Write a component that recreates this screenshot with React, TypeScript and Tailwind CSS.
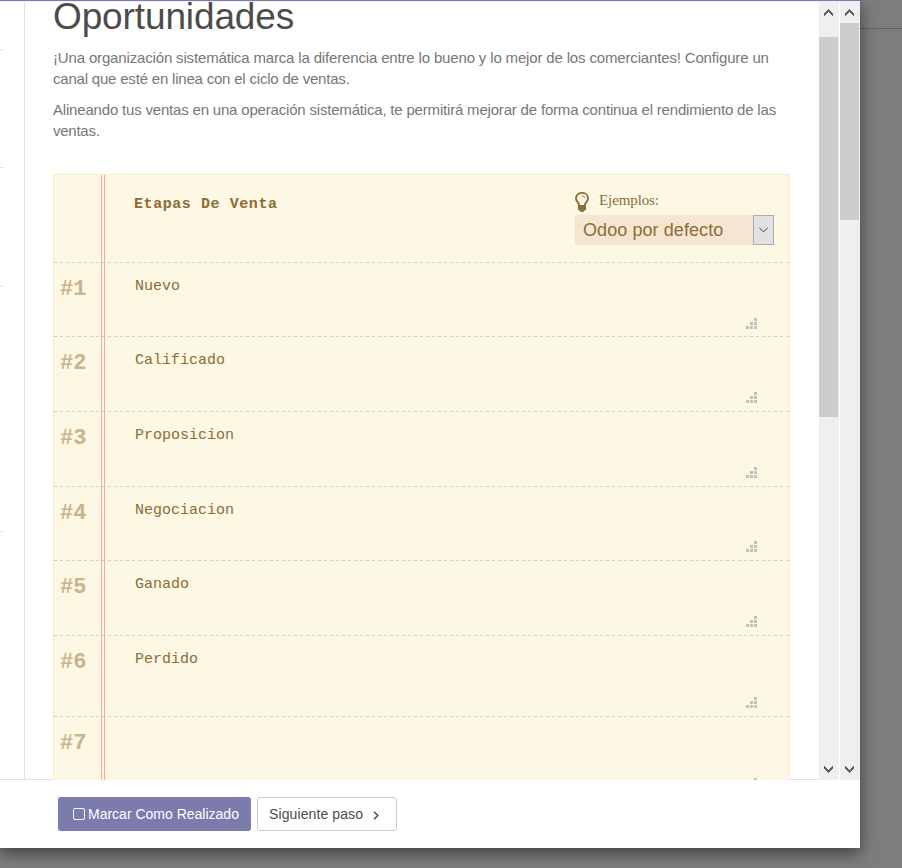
import React from "react";

const SANS = "font-['Liberation_Sans',Arial,sans-serif]";
const MONO = "font-['Liberation_Mono','Courier_New',monospace]";
const SERIF = "font-['Liberation_Serif','Times_New_Roman',serif]";

const DASH =
  "bg-[repeating-linear-gradient(90deg,#b6d5df_0px,#b6d5df_3px,transparent_3px,transparent_6px)]";

const stages = [
  { name: "Nuevo", height: "h-[74px]", grip: "pt-[55px]" },
  { name: "Calificado", height: "h-[75px]", grip: "pt-[55px]" },
  { name: "Proposicion", height: "h-[75px]", grip: "pt-[55px]" },
  { name: "Negociacion", height: "h-[74px]", grip: "pt-[54px]" },
  { name: "Ganado", height: "h-[75px]", grip: "pt-[55px]" },
  { name: "Perdido", height: "h-[81px]", grip: "pt-[61px]" },
  { name: "", height: "h-[81px]", grip: "pt-[61px]" },
];

function Grip() {
  return (
    <svg width="11" height="11" viewBox="0 0 11 11" fill="#c0c0c0" shapeRendering="crispEdges">
      <path d="M8 0h3v3h-3zM4 4h3v3h-3zM8 4h3v3h-3zM0 8h3v3h-3zM4 8h3v3h-3zM8 8h3v3h-3z" />
    </svg>
  );
}

function Bulb() {
  return (
    <svg width="14" height="20" viewBox="0 0 14 20" fill="none">
      <path
        d="M4.300 13.500C4.200 10.800 1 9.800 1 6.300C1 3 3.700 .9 7 .9s6 2.100 6 5.400c0 3.500-3.200 4.500-3.300 7.200"
        stroke="#8d6c38"
        strokeWidth="1.900"
      />
      <path d="M6.800 3.700c1.700 0 2.900.8 3.100 2.300" stroke="#8d6c38" strokeWidth=".9" />
      <path d="M3 13h8v4.700l-1.900 1-.8 1.300H5.700l-.8-1.300-1.900-1z" fill="#8d6c38" />
    </svg>
  );
}

function Arrow({ up }: { up?: boolean }) {
  return (
    <svg width="9" height="7" viewBox="0 0 9 7" fill="#606060" shapeRendering="crispEdges">
      <path
        transform={up ? undefined : "matrix(1 0 0 -1 0 7)"}
        d="M4 0h1v1h1v1h1v1h1v1h1v3h-1v-1h-1v-1h-1v-1h-1v-1h-1v1h-1v1h-1v1h-1v1h-1v-3h1v-1h1v-1h1v-1h1z"
      />
    </svg>
  );
}

function Scrollbar({ thumb, className }: { thumb: string; className: string }) {
  return (
    <div className={`flex h-[778px] shrink-0 flex-col items-start bg-[#efefef] ${className}`}>
      <div className={`w-[19px] shrink-0 ${thumb}`}>
        <div className="ml-[5px] pt-[7px]">
          <Arrow up />
        </div>
      </div>
      <div className="flex-1" />
      <div className="mb-[7px] ml-[5px]">
        <Arrow />
      </div>
    </div>
  );
}

function Tick({ gap }: { gap: string }) {
  return <div className={`h-px w-[3px] bg-[#e0e0e0] ${gap}`} />;
}

export default function App() {
  return (
    <div className={`h-[868px] w-[902px] overflow-hidden bg-[#7d7d7d] ${SANS}`}>
      <div className="flex">
        <div className="z-10 flex h-[848px] w-[860px] shrink-0 flex-col border-t border-[#7c7bad] bg-white shadow-[0_5px_15px_rgba(0,0,0,0.5)]">
          <div className="h-px shrink-0 bg-[#eeeef5]" />
          <div className="flex h-[778px] shrink-0 overflow-hidden">
            <div className="h-full w-[25px] shrink-0 border-r border-b border-[#e0e0e0]">
              <Tick gap="mt-[47px]" />
              <Tick gap="mt-[117px]" />
              <Tick gap="mt-[118px]" />
              <Tick gap="mt-[244px]" />
            </div>
            <div className="h-full w-[28px] shrink-0 border-b border-[#e0e0e0]" />
            <main className="h-full w-[737px] shrink-0">
              <h1 className="h-[36px] text-[37px] leading-[30px] tracking-[-0.12px] whitespace-nowrap text-[#4c4c4c]">
                Oportunidades
              </h1>
              <p className="mt-[9px] text-[15px] leading-[21px] whitespace-nowrap text-[#777]">
                <span className="tracking-[-0.157px]">
                  ¡Una organización sistemática marca la diferencia entre lo bueno y lo mejor de los comerciantes! Configure un
                </span>
                <br />
                <span className="tracking-[-0.2px]">canal que esté en linea con el ciclo de ventas.</span>
              </p>
              <p className="mt-[10px] text-[15px] leading-[21px] whitespace-nowrap text-[#777]">
                <span className="tracking-[-0.187px]">
                  Alineando tus ventas en una operación sistemática, te permitirá mejorar de forma continua el rendimiento de las
                </span>
                <br />
                <span className="tracking-[-0.25px]">ventas.</span>
              </p>
              <section className={`relative mt-[33px] border border-[#faebcc] bg-[#fcf8e3] text-[#8d6c38] ${MONO}`}>
                <div className="flex h-[87px]">
                  <h2 className="ml-[80px] w-[441px] pt-[21px] text-[15px] leading-[18px] font-bold tracking-[0.57px]">Etapas De Venta</h2>
                  <div>
                    <div className="flex h-[40px] pt-[17px]">
                      <Bulb />
                      <span className={`ml-[10px] text-[15px] leading-[17px] tracking-[-0.1px] ${SERIF}`}>Ejemplos:</span>
                    </div>
                    <div className="flex h-[30px] w-[199px] bg-[#f5e6d1]">
                      <span className={`flex-1 pl-[8px] text-[18px] leading-[30px] tracking-[0.08px] whitespace-nowrap ${SANS}`}>
                        Odoo por defecto
                      </span>
                      <span className="flex w-[21px] items-center justify-center border border-[#adadad] bg-[#e1e1e1]">
                        <svg width="9" height="6" viewBox="0 0 9 6" fill="none" stroke="#444">
                          <path d="M0.300 .7L4.500 4.900L8.700 .7" />
                        </svg>
                      </span>
                    </div>
                  </div>
                </div>
                {stages.map((stage, i) => (
                  <div key={i} className={`${stage.height}`}>
                    <div className={`h-px ${DASH}`} />
                    <div className="flex">
                      <div className="w-[81px] pt-[13px] pl-[6px] text-[22px] leading-[28px] font-bold text-[#cbb38b]">
                        #{i + 1}
                      </div>
                      <div className="w-[611px] pt-[15px] text-[15px] leading-[18px]">{stage.name}</div>
                      <div className={stage.grip}>
                        <Grip />
                      </div>
                    </div>
                  </div>
                ))}
                <div className="absolute top-0 bottom-0 left-[47px] w-[4px] border-x border-[#ffa599]" />
              </section>
            </main>
            <div className="h-full w-[28px] shrink-0 border-b border-[#e0e0e0]" />
            <Scrollbar className="ml-px w-5" thumb="h-[415px] bg-[linear-gradient(#efefef_35px,#cdcdcd_35px)]" />
            <Scrollbar className="ml-px w-5" thumb="h-[218px] bg-[linear-gradient(#efefef_21px,#cdcdcd_21px)]" />
          </div>
          <footer className="flex gap-[6px] pt-[17px] pl-[58px]">
            <button className="flex h-[34px] w-[193px] items-center rounded-[3px] bg-[#7c7bad] pl-[15px] text-[14px] text-white">
              <span className="mr-[3px] mb-px h-[12px] w-[12px] rounded-[2px] border border-white" />
              <span className="whitespace-nowrap">Marcar Como Realizado</span>
            </button>
            <button className="flex h-[34px] w-[140px] items-center rounded-[3px] border border-[#ccc] bg-white pl-[11px] text-[14px] text-[#4c4c4c]">
              <span className="tracking-[0.1px] whitespace-nowrap">Siguiente paso</span>
              <svg className="mt-[3px] ml-[10px]" width="6" height="9" viewBox="0 0 6 9" fill="none" stroke="#4c4c4c" strokeWidth="1.500">
                <path d="M1 .7L4.800 4.500L1 8.300" />
              </svg>
            </button>
          </footer>
        </div>
        <div className="mt-[28px] h-px flex-1 bg-[#5f5f5f]" />
      </div>
    </div>
  );
}
